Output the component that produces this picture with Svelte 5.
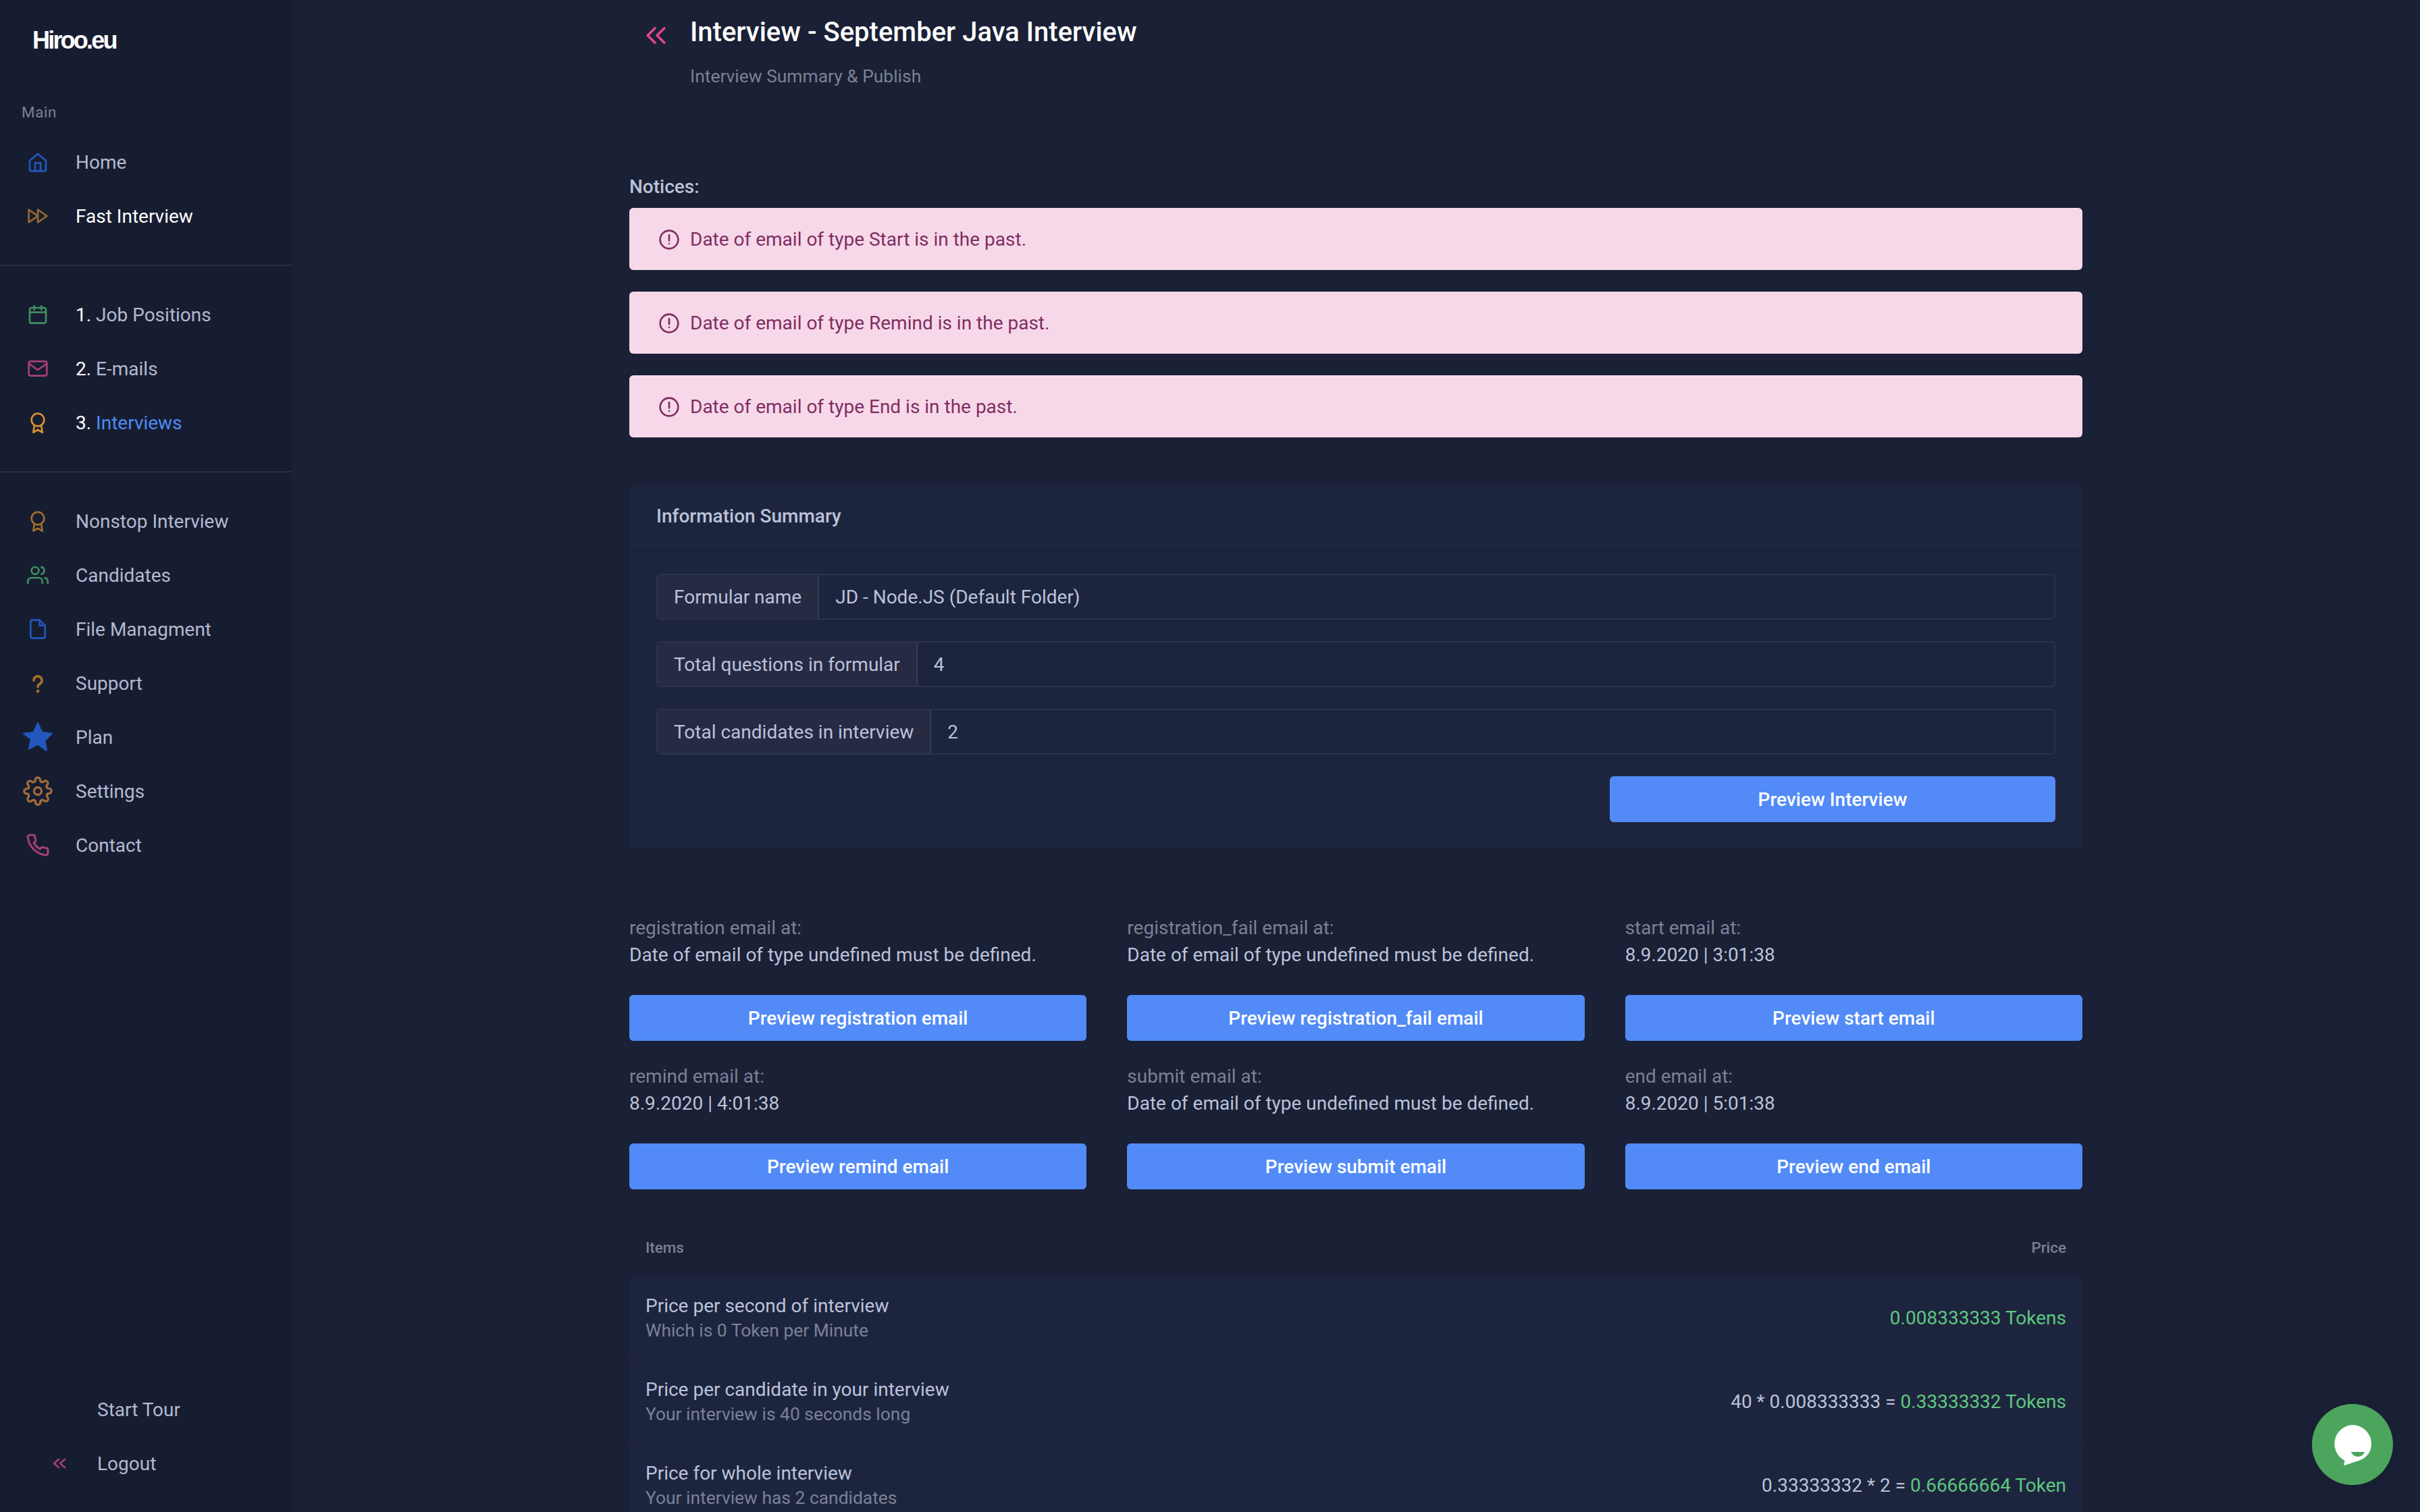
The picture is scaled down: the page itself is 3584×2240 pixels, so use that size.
<script>
  const main = [
    { label: 'Home', icon: 'home', color: '#2257bf' },
    { label: 'Fast Interview', icon: 'fast', color: '#95692f', active: true }
  ];
  const steps = [
    { n: '1.', label: 'Job Positions', icon: 'cal', color: '#3f8f5f' },
    { n: '2.', label: 'E-mails', icon: 'mail', color: '#a63f78' },
    { n: '3.', label: 'Interviews', icon: 'award', color: '#d8922f', current: true }
  ];
  const other = [
    { label: 'Nonstop Interview', icon: 'award', color: '#a06f2b' },
    { label: 'Candidates', icon: 'users', color: '#3f8f5f' },
    { label: 'File Managment', icon: 'file', color: '#2257bf' },
    { label: 'Support', icon: 'help', color: '#a06f2b' },
    { label: 'Plan', icon: 'star', color: '#2257bf' },
    { label: 'Settings', icon: 'gear', color: '#a06c3c' },
    { label: 'Contact', icon: 'phone', color: '#a63f78' }
  ];
  const notices = ['Start', 'Remind', 'End'];
  const infos = [
    ['Formular name', 'JD - Node.JS (Default Folder)'],
    ['Total questions in formular', '4'],
    ['Total candidates in interview', '2']
  ];
  const undef = 'Date of email of type undefined must be defined.';
  const emails = [
    ['registration', undef], ['registration_fail', undef], ['start', '8.9.2020 | 3:01:38'],
    ['remind', '8.9.2020 | 4:01:38'], ['submit', undef], ['end', '8.9.2020 | 5:01:38']
  ];
  const prices = [
    { t: 'Price per second of interview', s: 'Which is 0 Token per Minute', pre: '', v: '0.008333333 Tokens' },
    { t: 'Price per candidate in your interview', s: 'Your interview is 40 seconds long', pre: '40 * 0.008333333 = ', v: '0.33333332 Tokens' },
    { t: 'Price for whole interview', s: 'Your interview has 2 candidates', pre: '0.33333332 * 2 = ', v: '0.66666664 Token' }
  ];
</script>

{#snippet icon(name, color)}
  <svg class="ic {name}" viewBox="0 0 24 24" fill="none" stroke={color} stroke-width="2" stroke-linecap="round" stroke-linejoin="round">
    {#if name === 'home'}
      <path d="M3 10.500L12 3l9 7.500V20a2 2 0 0 1-2 2H5a2 2 0 0 1-2-2z" /><path d="M9 22v-9h6v9" />
    {:else if name === 'fast'}
      <path d="M2 5l10 7-10 7z" /><path d="M12 5l10 7-10 7z" />
    {:else if name === 'cal'}
      <rect x="3" y="4.500" width="18" height="17" rx="2" /><path d="M16 2.500v4M8 2.500v4M3 9.500h18" />
    {:else if name === 'mail'}
      <rect x="2" y="4" width="20" height="16" rx="2" /><path d="M2 6.500l10 7 10-7" />
    {:else if name === 'award'}
      <circle cx="12" cy="9" r="7" /><path d="M8.200 15l-1.200 8 5-3 5 3-1.200-8" />
    {:else if name === 'users'}
      <path d="M17 21v-2a4 4 0 0 0-4-4H5a4 4 0 0 0-4 4v2" /><circle cx="9" cy="7" r="4" /><path d="M23 21v-2a4 4 0 0 0-3-3.900M16 3.100a4 4 0 0 1 0 7.800" />
    {:else if name === 'file'}
      <path d="M14 2H6a2 2 0 0 0-2 2v16a2 2 0 0 0 2 2h12a2 2 0 0 0 2-2V8z" /><path d="M14 2v6h6" />
    {:else if name === 'help'}
      <path d="M7.500 9a4.500 4.500 0 1 1 7 3.700c-1.600 1-2.500 1.800-2.500 3.300" stroke-width="2.800" /><path d="M12 21h.01" stroke-width="3.600" />
    {:else if name === 'star'}
      <path fill={color} d="M12 2l3 6.600 7 .9-5.100 4.900 1.300 7.100L12 17.100 5.800 20.500l1.300-7.100L2 9.500l7-.9z" stroke-width="1" />
    {:else if name === 'gear'}
      <circle cx="12" cy="12" r="3" stroke-width="1.800" /><path stroke-width="1.800" d="M19.400 15a1.650 1.650 0 0 0 .33 1.820l.06.06a2 2 0 1 1-2.830 2.830l-.06-.06a1.650 1.650 0 0 0-2.820 1.170V21a2 2 0 0 1-4 0v-.09A1.650 1.650 0 0 0 7.200 19.740l-.06.06a2 2 0 1 1-2.830-2.830l.06-.06A1.650 1.650 0 0 0 3.200 14.100H3a2 2 0 0 1 0-4h.09A1.650 1.650 0 0 0 4.260 7.200l-.06-.06a2 2 0 1 1 2.830-2.830l.06.06A1.650 1.650 0 0 0 9.900 3.200V3a2 2 0 0 1 4 0v.09a1.650 1.650 0 0 0 2.800 1.170l.06-.06a2 2 0 1 1 2.830 2.830l-.06.06A1.650 1.650 0 0 0 20.800 9.900H21a2 2 0 0 1 0 4h-.09a1.650 1.650 0 0 0-1.510 1z" />
    {:else if name === 'phone'}
      <path d="M22 16.900v3a2 2 0 0 1-2.200 2 19.800 19.800 0 0 1-8.600-3.100 19.500 19.500 0 0 1-6-6A19.800 19.800 0 0 1 2.100 4.200 2 2 0 0 1 4.100 2h3a2 2 0 0 1 2 1.700c.1 1 .4 1.900.7 2.800a2 2 0 0 1-.5 2.100L8.100 9.900a16 16 0 0 0 6 6l1.300-1.300a2 2 0 0 1 2.100-.4c.9.3 1.800.6 2.800.7a2 2 0 0 1 1.700 2z" />
    {/if}
  </svg>
{/snippet}

{#snippet navItem(it)}
  <li class="item">
    <span class="ic-wrap">{@render icon(it.icon, it.color)}</span>
    <span class="lbl" class:active={it.active}>
      {#if it.n}<span class="num">{it.n}&nbsp;</span>{/if}<span class:current={it.current}>{it.label}</span>
    </span>
  </li>
{/snippet}

<div class="app">
  <aside class="side">
    <div class="logo">Hiroo.eu</div>
    <div class="sec-title">Main</div>
    <ul class="nav first">{#each main as it}{@render navItem(it)}{/each}</ul>
    <div class="sep"></div>
    <ul class="nav">{#each steps as it}{@render navItem(it)}{/each}</ul>
    <div class="sep"></div>
    <ul class="nav">{#each other as it}{@render navItem(it)}{/each}</ul>
    <div class="side-bottom">
      <div class="bottom-row"><span class="lbl">Start Tour</span></div>
      <div class="bottom-row">
        <svg class="chev-s" viewBox="0 0 24 24" fill="none" stroke="#a63f78" stroke-width="2.600" stroke-linecap="round" stroke-linejoin="round"><path d="M11 18l-7-6 7-6M20 18l-7-6 7-6" /></svg>
        <span class="lbl">Logout</span>
      </div>
    </div>
  </aside>

  <main class="main">
    <header class="head">
      <svg class="chev" viewBox="0 0 24 24" fill="none" stroke="#e0468f" stroke-width="2.400" stroke-linecap="round" stroke-linejoin="round"><path d="M11 19l-7-7 7-7M20 19l-7-7 7-7" /></svg>
      <div>
        <h1>Interview - September Java Interview</h1>
        <p class="sub">Interview Summary &amp; Publish</p>
      </div>
    </header>

    <h2 class="notices">Notices:</h2>
    <div class="alerts">
      {#each notices as n}
        <div class="alert">
          <svg class="al-ic" viewBox="0 0 24 24" fill="none" stroke="#7f2d62" stroke-width="2" stroke-linecap="round"><circle cx="12" cy="12" r="10" /><path d="M12 7v6M12 16.500h.01" /></svg>
          <span>Date of email of type {n} is in the past.</span>
        </div>
      {/each}
    </div>

    <section class="card">
      <div class="card-head">Information Summary</div>
      <div class="card-body">
        {#each infos as [k, v]}
          <div class="group"><span class="g-label">{k}</span><span class="g-value">{v}</span></div>
        {/each}
        <div class="card-actions"><button class="btn wide">Preview Interview</button></div>
      </div>
    </section>

    <div class="emails">
      {#each emails as [k, v]}
        <div class="email">
          <div class="e-label">{k} email at:</div>
          <div class="e-value">{v}</div>
          <button class="btn">Preview {k} email</button>
        </div>
      {/each}
    </div>

    <div class="table-head"><span>Items</span><span>Price</span></div>
    <div class="rows">
      {#each prices as p}
        <div class="row">
          <div><div class="r-title">{p.t}</div><div class="r-sub">{p.s}</div></div>
          <div class="r-price">{p.pre}<span class="green">{p.v}</span></div>
        </div>
      {/each}
    </div>
  </main>

  <div class="chat">
    <svg viewBox="0 0 60 64" width="60" height="64">
      <path fill="#fff" d="M30 2a28 28 0 0 1 28 28c0 12-7 20-16 24l-24 8c-1 0-1-1-.6-2l1-4c.2-1-.3-1.400-1.400-2A28 28 0 0 1 30 2z" />
      <path fill="#4ca55c" d="M28 42h20c-1.500 4-5 7-10 7s-8.500-3-10-7z" />
    </svg>
  </div>
</div>

<style>
  :global(body) { margin: 0; background: #1a2035; }
  * { box-sizing: border-box; }
  .app {
    display: flex; width: 3584px; height: 2240px; overflow: hidden;
    background: #1a2035; font-family: Roboto, "Liberation Sans", sans-serif; font-size: 28px; color: #bcc2da;
    position: relative;
  }
  .side { width: 432px; flex: none; height: 100%; background: #171d30; display: flex; flex-direction: column; }
  .logo {
    font-family: "Liberation Sans", Arial, sans-serif; font-weight: 700; font-size: 36px; color: #fff;
    letter-spacing: -2.800px; padding: 38px 0 0 48px; line-height: 44px; height: 82px;
  }
  .sec-title { margin-top: 68px; padding-left: 32px; font-size: 22.400px; line-height: 32px; color: #7b8196; letter-spacing: 0.6px; }
  .nav { list-style: none; margin: 0; padding: 0; }
  .nav.first { margin-top: 18px; }
  .item { display: flex; align-items: center; height: 80px; }
  .ic-wrap { width: 112px; flex: none; display: flex; justify-content: center; }
  .ic { width: 32px; height: 32px; display: block; }
  .ic.gear { width: 44px; height: 44px; }
  .ic.star { width: 50px; height: 50px; }
  .ic.phone { width: 36px; height: 36px; }
  .lbl { color: #b3b9d2; letter-spacing: 0; font-size: 28px; }
  .lbl.active { color: #fff; }
  .num { color: #fff; }
  .current { color: #4f8bf5; }
  .sep { height: 2px; background: #2a3044; margin: 32px 0; }
  .side-bottom { margin-top: auto; padding-bottom: 32px; }
  .bottom-row { height: 80px; display: flex; align-items: center; padding-left: 144px; position: relative; }
  .chev-s { position: absolute; left: 76px; width: 24px; height: 24px; }

  .main { flex: 1; min-width: 0; padding: 0 500px 0 500px; }
  .head { display: flex; margin-left: 21px; padding-top: 24px; height: 259px; }
  .chev { width: 37px; height: 37px; margin-right: 32px; margin-top: 10px; }
  h1 { margin: 0; font-size: 40px; font-weight: 500; color: #fff; line-height: 48px; }
  .sub { margin: 21px 0 0; font-size: 26.400px; line-height: 40px; color: #7b8196; }
  .notices { margin: 1px 0 15px; font-size: 28px; font-weight: 500; color: #bcc2da; line-height: 33px; }
  .alerts { display: flex; flex-direction: column; gap: 32px; }
  .alert {
    height: 92px; background: #f7d8e9; border-radius: 6px; color: #7f2d62; display: flex; align-items: center;
    padding-left: 43px; gap: 15px;
  }
  .al-ic { width: 32px; height: 32px; margin-top: 2px; }
  .card { margin-top: 72px; background: #1d253e; border-radius: 6px; height: 537px; }
  .card-head { height: 88px; padding: 2px 40px 0; display: flex; align-items: center; font-weight: 500; border-bottom: 2px solid #1f2742; }
  .card-body { padding: 42px 40px 0; display: flex; flex-direction: column; gap: 32px; }
  .group { display: flex; height: 68px; border: 2px solid #2c3349; border-radius: 6px; align-items: stretch; }
  .g-label { background: #262a43; padding: 0 24px; display: flex; align-items: center; border-right: 2px solid #363c52; border-radius: 6px 0 0 6px; }
  .g-value { padding: 0 24px; display: flex; align-items: center; flex: 1; }
  .card-actions { display: flex; justify-content: flex-end; }
  .btn {
    height: 68px; border: 0; border-radius: 6px; background: #528bf7; color: #fff; font: 500 28px Roboto, sans-serif; width: 100%;
  }
  .btn.wide { width: 660px; }
  .emails { margin-top: 82px; display: grid; grid-template-columns: repeat(3, 1fr); column-gap: 60px; row-gap: 0; }
  .email { height: 220px; padding-top: 16px; }
  .e-label { color: #7b8196; line-height: 40px; }
  .e-value { color: #bcc2da; line-height: 40px; margin-bottom: 39px; }
  .table-head { display: flex; justify-content: space-between; padding: 0 24px; height: 60px; margin: 39px 0 12px; align-items: center; font-size: 22.400px; font-weight: 500; color: #7b8196; }
  .row { height: 124px; display: flex; justify-content: space-between; align-items: center; padding: 0 24px; background: #1d253e; border-radius: 6px; }
  .r-title { line-height: 36px; color: #bcc2da; padding-top: 1px; }
  .r-sub { line-height: 36px; font-size: 26.400px; color: #7b8196; }
  .r-price { color: #bcc2da; }
  .green { color: #5ec77f; }
  .chat {
    position: absolute; right: 40px; bottom: 40px; width: 120px; height: 120px; border-radius: 50%;
    background: #4ca55c; display: flex; align-items: center; justify-content: center; padding-top: 2px;
    box-shadow: 0 4px 24px rgba(0, 0, 0, 0.08);
  }
</style>
